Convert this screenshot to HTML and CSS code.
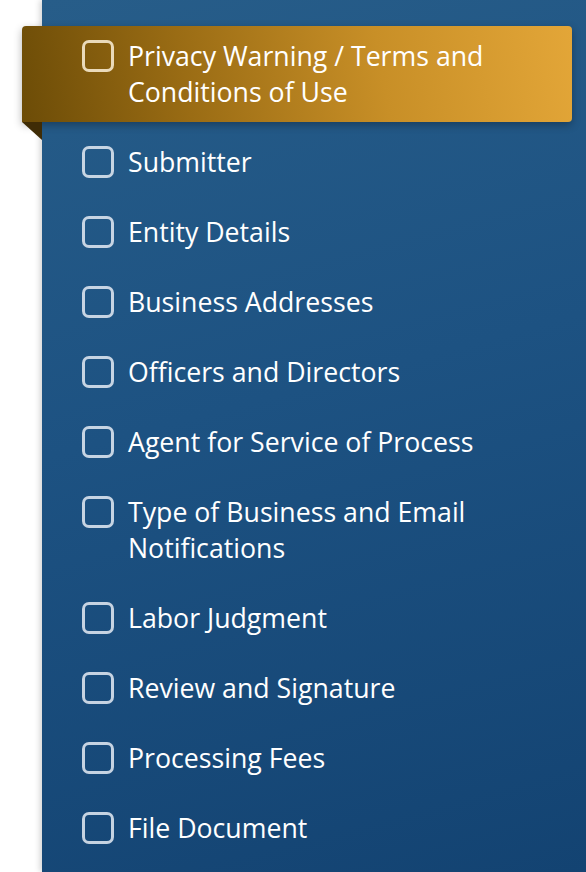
FILE: index.html
```html
<!DOCTYPE html>
<html lang="en">
<head>
<meta charset="utf-8">
<title>Steps</title>
<link rel="stylesheet" href="styles.css">
</head>
<body>
<div class="page">
  <div class="gutter"></div>
  <nav class="panel">
    <ul class="steps">
      <li class="step active"><span class="box"></span><span class="label">Privacy Warning / Terms and Conditions of Use</span></li>
      <li class="step"><span class="box"></span><span class="label">Submitter</span></li>
      <li class="step"><span class="box"></span><span class="label">Entity Details</span></li>
      <li class="step"><span class="box"></span><span class="label">Business Addresses</span></li>
      <li class="step"><span class="box"></span><span class="label">Officers and Directors</span></li>
      <li class="step"><span class="box"></span><span class="label">Agent for Service of Process</span></li>
      <li class="step"><span class="box"></span><span class="label">Type of Business and Email Notifications</span></li>
      <li class="step"><span class="box"></span><span class="label">Labor Judgment</span></li>
      <li class="step"><span class="box"></span><span class="label">Review and Signature</span></li>
      <li class="step"><span class="box"></span><span class="label">Processing Fees</span></li>
      <li class="step"><span class="box"></span><span class="label">File Document</span></li>
    </ul>
  </nav>
</div>
</body>
</html>
```
FILE: styles.css
```css
html, body {
  margin: 0;
  padding: 0;
  height: 100%;
  background: #ffffff;
}
body {
  font-family: "Open Sans", "Noto Sans", sans-serif;
  overflow: hidden;
}
.page {
  display: flex;
  height: 100vh;
}
.gutter {
  width: 42px;
  flex: none;
  background: #ffffff;
}
.panel {
  flex: 1;
  background: linear-gradient(165deg, #275d89 0%, #1d5282 45%, #134372 100%);
  box-shadow: -2px 0 6px rgba(0, 0, 0, 0.18);
  padding-top: 26px;
}
.steps {
  list-style: none;
  margin: 0;
  padding: 0;
  display: flex;
  flex-direction: column;
  gap: 10px;
}
.step {
  position: relative;
  display: flex;
  align-items: flex-start;
  gap: 14px;
  padding: 12px 14px 12px 40px;
  color: #ffffff;
  font-size: 26.7px;
  line-height: 36px;
}
.step.active {
  margin-left: -20px;
  margin-right: 14px;
  padding-left: 60px;
  border-radius: 4px 4px 4px 0;
  background: linear-gradient(80deg, #6c4c07 0%, #9a6c14 30%, #c88f27 65%, #e3a638 100%);
  box-shadow: 0 3px 8px rgba(0, 0, 0, 0.3);
}
.step.active::after {
  content: "";
  position: absolute;
  left: 0;
  top: 100%;
  width: 0;
  height: 0;
  border-top: 18px solid #3f2c06;
  border-left: 20px solid transparent;
}
.box {
  flex: none;
  width: 26px;
  height: 26px;
  margin-top: 2px;
  border: 3px solid rgba(222, 230, 240, 0.88);
  border-radius: 7px;
}
.step.active .box {
  border-color: rgba(245, 232, 205, 0.9);
}
.label {
  flex: 1;
}
```
